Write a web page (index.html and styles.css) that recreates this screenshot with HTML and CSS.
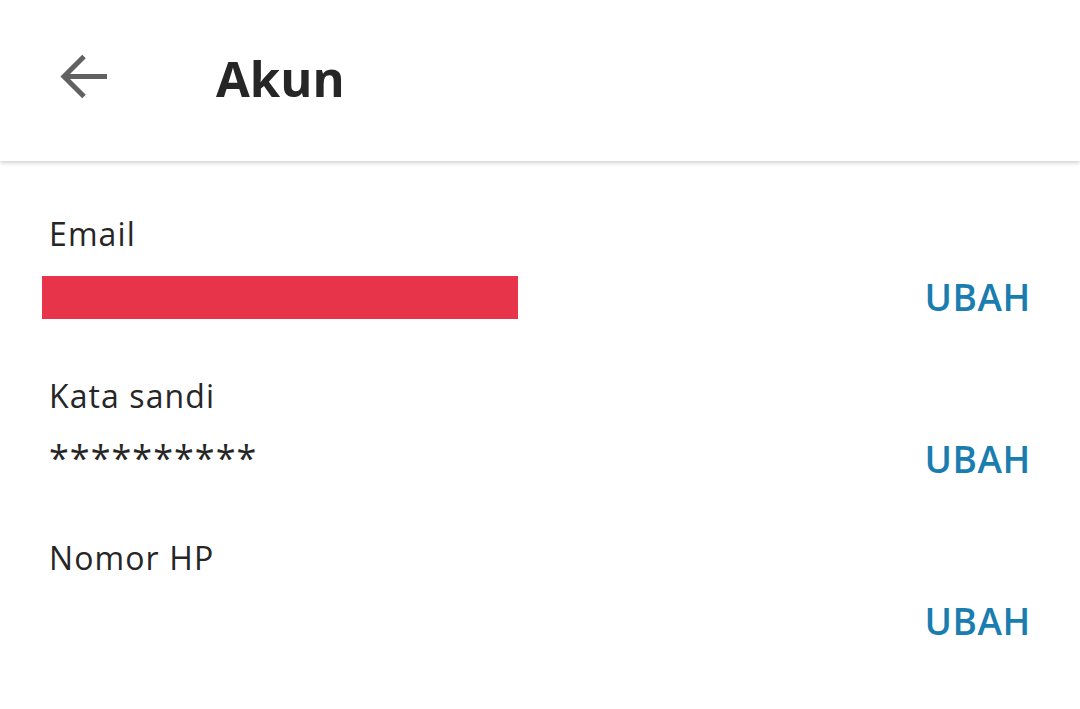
FILE: index.html
```html
<!DOCTYPE html>
<html lang="id">
<head>
  <meta charset="UTF-8" />
  <title>Akun</title>
  <link rel="stylesheet" href="styles.css">
</head>
<body>
  <header class="topbar">
    <a href="#" class="back-button" aria-label="Kembali">
      <svg width="52" height="52" viewBox="0 0 52 52">
        <path d="M49 24.5H8 M26 4.5L6 24.5L26 44.5" fill="none" stroke="#616161" stroke-width="5"/>
      </svg>
    </a>
    <h1>Akun</h1>
  </header>

  <main class="account">
    <div class="row">
      <div class="label">Email</div>
      <div class="value-line">
        <div class="redacted"></div>
        <a href="#" class="edit">UBAH</a>
      </div>
    </div>

    <div class="row">
      <div class="label">Kata sandi</div>
      <div class="value-line">
        <div class="password">**********</div>
        <a href="#" class="edit">UBAH</a>
      </div>
    </div>

    <div class="row">
      <div class="label">Nomor HP</div>
      <div class="value-line">
        <div class="value"></div>
        <a href="#" class="edit">UBAH</a>
      </div>
    </div>
  </main>
</body>
</html>
```

FILE: styles.css
```css
body, h1 {
  margin: 0;
  padding: 0;
  box-sizing: border-box;
}

body {
  font-family: 'Open Sans', 'Noto Sans', sans-serif;
  background-color: #ffffff;
  color: #262626;
  min-height: 100vh;
}

.topbar {
  height: 161px;
  display: flex;
  align-items: center;
  padding-left: 58px;
  background-color: #ffffff;
  box-shadow: 0 2px 4px rgba(0, 0, 0, 0.18);
  position: relative;
}

.back-button {
  display: flex;
  width: 52px;
  height: 52px;
  margin-top: -6px;
}

h1 {
  margin-left: 106px;
  margin-top: -5px;
  font-size: 49px;
  font-weight: 700;
  color: #262626;
}

.account {
  padding-top: 51px;
}

.row {
  padding: 0 50px 49px 49px;
}

.label {
  font-size: 32px;
  line-height: 44px;
  letter-spacing: 1.1px;
}

.value-line {
  display: flex;
  align-items: center;
  justify-content: space-between;
  height: 56px;
  margin-top: 13px;
}

.redacted {
  width: 476px;
  height: 43px;
  margin-left: -7px;
  background-color: #e8344a;
}

.password {
  font-size: 36px;
  letter-spacing: 1px;
  margin-top: -4px;
}

.edit {
  font-size: 37px;
  font-weight: 600;
  letter-spacing: 0.6px;
  margin-top: -2px;
  margin-right: -1px;
  color: #1a7db0;
  text-decoration: none;
}
```
